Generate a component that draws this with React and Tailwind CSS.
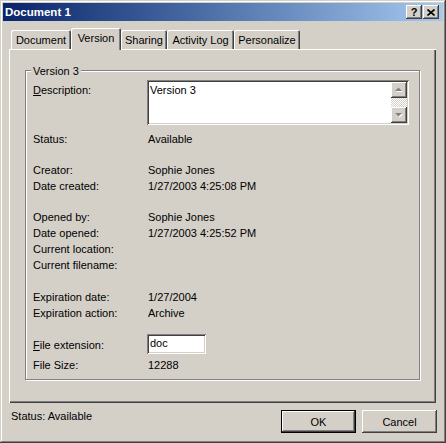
const raised =
  "shadow-[inset_-1px_-1px_0_#404040,inset_1px_1px_0_#fff,inset_-2px_-2px_0_#808080,inset_2px_2px_0_#d4d0c8]";

function Row({ label, value, className = "" }) {
  return (
    <div className={`flex h-[16px] leading-[16px] ${className}`}>
      <span className="w-[115px] shrink-0">{label}</span>
      <span>{value}</span>
    </div>
  );
}

function ScrollArrow({ up }) {
  return (
    <div className={`h-[16px] w-[16px] bg-[#d4d0c8] ${raised}`}>
      <svg width="16" height="16" viewBox="0 0 16 16">
        {up ? (
          <>
            <polygon points="5,10 12,10 8.5,6.5" fill="#fff" />
            <polygon points="4,9 11,9 7.5,5.5" fill="#808080" />
          </>
        ) : (
          <>
            <polygon points="5,7 12,7 8.5,10.5" fill="#fff" />
            <polygon points="4,6 11,6 7.5,9.5" fill="#808080" />
          </>
        )}
      </svg>
    </div>
  );
}

const tabs = [
  { name: "Document", w: "w-[60px]" },
  { name: "Version", w: "w-[50px]", active: true },
  { name: "Sharing", w: "w-[46px]" },
  { name: "Activity Log", w: "w-[67px]" },
  { name: "Personalize", w: "w-[66px]" },
];

export default function App() {
  return (
    <div className="flex h-[443px] w-[446px] flex-col bg-[#d4d0c8] p-[3px] font-['Liberation_Sans',Arial,sans-serif] text-[11px] text-black shadow-[inset_-1px_-1px_0_#404040,inset_1px_1px_0_#d4d0c8,inset_-2px_-2px_0_#808080,inset_2px_2px_0_#fff]">
      {/* title bar */}
      <div className="flex h-[18px] shrink-0 items-center bg-linear-to-r from-[#0a246a] to-[#a6caf0] pl-[2px] pr-[4px]">
        <span className="text-[11.5px] font-bold leading-[16px] text-white">Document 1</span>
        <div className="ml-auto flex gap-[1px]">
          <div className={`flex h-[14px] w-[16px] items-center justify-center bg-[#d4d0c8] text-[11px] font-bold leading-none ${raised}`}>
            ?
          </div>
          <div className={`flex h-[14px] w-[16px] items-center justify-center bg-[#d4d0c8] ${raised}`}>
            <svg width="8" height="7" viewBox="0 0 8 7">
              <path d="M0.5 0.5 L7.5 6.5 M7.5 0.5 L0.5 6.5" stroke="#000" strokeWidth="1.6" />
            </svg>
          </div>
        </div>
      </div>

      {/* tabs */}
      <div className="mt-[7px] flex h-[21px] shrink-0 items-end pl-[8px]">
        {tabs.map((t) =>
          t.active ? (
            <div
              key={t.name}
              className={`relative z-10 -mb-px flex h-[22px] ${t.w} items-center justify-center rounded-t-[2px] bg-[#d4d0c8] pb-[3px] leading-[16px] shadow-[inset_1px_1px_0_#fff,inset_-1px_0_0_#404040,inset_-2px_0_0_#808080]`}
            >
              {t.name}
            </div>
          ) : (
            <div
              key={t.name}
              className={`flex h-[19px] ${t.w} items-center justify-center rounded-t-[2px] leading-[16px] shadow-[inset_1px_1px_0_#fff,inset_-1px_0_0_#404040,inset_-2px_0_0_#808080]`}
            >
              {t.name}
            </div>
          )
        )}
      </div>

      {/* tab panel */}
      <div className="ml-[6px] h-[354px] w-[427px] shrink-0 pt-[21px] shadow-[inset_1px_1px_0_#fff,inset_-1px_-1px_0_#404040,inset_-2px_-2px_0_#808080]">
        <div className="relative ml-[16px] h-[310px] w-[395px] border border-[#808080] pl-[7px] shadow-[1px_1px_0_#fff,inset_1px_1px_0_#fff]">
          <span className="absolute -top-[8px] left-[5px] bg-[#d4d0c8] px-[2px] leading-[16px]">Version 3</span>

          <div className="mt-[9px] flex h-[45px]">
            <span className="w-[114px] shrink-0 pt-[2px] leading-[16px]">
              <span className="underline">D</span>escription:
            </span>
            <div className="flex h-[45px] w-[262px] bg-white p-[2px] shadow-[inset_1px_1px_0_#808080,inset_-1px_-1px_0_#fff,inset_2px_2px_0_#404040,inset_-2px_-2px_0_#d4d0c8]">
              <div className="flex-1 pl-[1px] leading-[16px]">Version 3</div>
              <div className="flex w-[16px] flex-col">
                <ScrollArrow up />
                <div className="flex-1 bg-[repeating-conic-gradient(#fff_0_25%,#d4d0c8_0_50%)] bg-[length:2px_2px]" />
                <ScrollArrow />
              </div>
            </div>
          </div>

          <Row className="mt-[6px]" label="Status:" value="Available" />

          <Row className="mt-[15px]" label="Creator:" value="Sophie Jones" />
          <Row label="Date created:" value="1/27/2003 4:25:08 PM" />

          <Row className="mt-[15px]" label="Opened by:" value="Sophie Jones" />
          <Row label="Date opened:" value="1/27/2003 4:25:52 PM" />
          <Row label="Current location:" value="" />
          <Row label="Current filename:" value="" />

          <Row className="mt-[16px]" label="Expiration date:" value="1/27/2004" />
          <Row label="Expiration action:" value="Archive" />

          <div className="mt-[13px] flex h-[20px]">
            <span className="w-[114px] shrink-0 pt-[3px] leading-[16px]">
              <span className="underline">F</span>ile extension:
            </span>
            <div className="h-[20px] w-[59px] bg-white pl-[3px] pt-[1px] leading-[16px] shadow-[inset_1px_1px_0_#808080,inset_-1px_-1px_0_#fff,inset_2px_2px_0_#404040,inset_-2px_-2px_0_#d4d0c8]">
              doc
            </div>
          </div>
          <Row className="mt-[3px]" label="File Size:" value="12288" />
        </div>
      </div>

      {/* status + buttons */}
      <div className="flex flex-1 items-start">
        <span className="ml-[8px] mt-[5px] leading-[16px]">Status: Available</span>
        <div className="ml-auto mr-[6px] mt-[7px] flex gap-[6px]">
          <button className="h-[23px] w-[75px] border border-black bg-[#d4d0c8]">
            <div className={`flex h-full w-full items-center justify-center leading-[16px] ${raised}`}>OK</div>
          </button>
          <button className={`h-[23px] w-[75px] bg-[#d4d0c8] leading-[16px] ${raised}`}>Cancel</button>
        </div>
      </div>
    </div>
  );
}
